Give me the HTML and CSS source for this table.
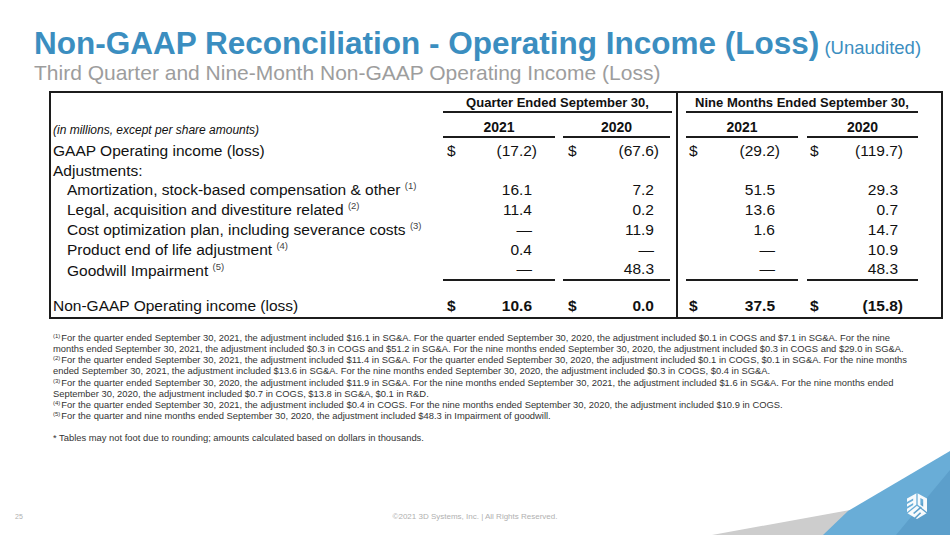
FILE: index.html
```html
<!DOCTYPE html>
<html lang="en">
<head>
<meta charset="utf-8">
<title>Non-GAAP Reconciliation - Operating Income (Loss)</title>
<link rel="stylesheet" href="styles.css">
</head>
<body>
<div class="slide">
  <header class="head">
    <h1 class="title">Non-GAAP Reconciliation - Operating Income (Loss)<span class="unaud"> (Unaudited)</span></h1>
    <h2 class="subtitle">Third Quarter and Nine-Month Non-GAAP Operating Income (Loss)</h2>
  </header>

  <div class="tablewrap">
    <table class="recon">
      <colgroup>
        <col class="w-lab"><col class="w-c1"><col class="w-c2"><col class="w-c3"><col class="w-c4">
      </colgroup>
      <tr class="hdr1">
        <td class="lab"></td>
        <td class="c1 grpcell" colspan="2"><div class="grp">Quarter Ended September 30,</div></td>
        <td class="c3 grpcell3" colspan="2"><div class="grp">Nine Months Ended September 30,</div></td>
      </tr>
      <tr class="hdr2">
        <td class="lab units">(in millions, except per share amounts)</td>
        <td class="c1"><div class="yr">2021</div></td>
        <td class="c2"><div class="yr">2020</div></td>
        <td class="c3"><div class="yr">2021</div></td>
        <td class="c4"><div class="yr">2020</div></td>
      </tr>
      <tr>
        <td class="lab">GAAP Operating income (loss)</td>
        <td class="c1"><div class="v"><span class="d">$</span><span class="n">(17.2<span class="cp">)</span></span></div></td>
        <td class="c2"><div class="v"><span class="d">$</span><span class="n">(67.6<span class="cp">)</span></span></div></td>
        <td class="c3"><div class="v"><span class="d">$</span><span class="n">(29.2<span class="cp">)</span></span></div></td>
        <td class="c4"><div class="v"><span class="d">$</span><span class="n">(119.7<span class="cp">)</span></span></div></td>
      </tr>
      <tr>
        <td class="lab">Adjustments:</td>
        <td class="c1"></td><td class="c2"></td><td class="c3"></td><td class="c4"></td>
      </tr>
      <tr>
        <td class="lab ind">Amortization, stock-based compensation &amp; other <sup class="ref">(1)</sup></td>
        <td class="c1"><div class="v"><span class="d"></span><span class="n">16.1</span></div></td>
        <td class="c2"><div class="v"><span class="d"></span><span class="n">7.2</span></div></td>
        <td class="c3"><div class="v"><span class="d"></span><span class="n">51.5</span></div></td>
        <td class="c4"><div class="v"><span class="d"></span><span class="n">29.3</span></div></td>
      </tr>
      <tr>
        <td class="lab ind">Legal, acquisition and divestiture related <sup class="ref">(2)</sup></td>
        <td class="c1"><div class="v"><span class="d"></span><span class="n">11.4</span></div></td>
        <td class="c2"><div class="v"><span class="d"></span><span class="n">0.2</span></div></td>
        <td class="c3"><div class="v"><span class="d"></span><span class="n">13.6</span></div></td>
        <td class="c4"><div class="v"><span class="d"></span><span class="n">0.7</span></div></td>
      </tr>
      <tr>
        <td class="lab ind">Cost optimization plan, including severance costs <sup class="ref">(3)</sup></td>
        <td class="c1"><div class="v"><span class="d"></span><span class="n">—</span></div></td>
        <td class="c2"><div class="v"><span class="d"></span><span class="n">11.9</span></div></td>
        <td class="c3"><div class="v"><span class="d"></span><span class="n">1.6</span></div></td>
        <td class="c4"><div class="v"><span class="d"></span><span class="n">14.7</span></div></td>
      </tr>
      <tr>
        <td class="lab ind">Product end of life adjustment <sup class="ref">(4)</sup></td>
        <td class="c1"><div class="v"><span class="d"></span><span class="n">0.4</span></div></td>
        <td class="c2"><div class="v"><span class="d"></span><span class="n">—</span></div></td>
        <td class="c3"><div class="v"><span class="d"></span><span class="n">—</span></div></td>
        <td class="c4"><div class="v"><span class="d"></span><span class="n">10.9</span></div></td>
      </tr>
      <tr class="last">
        <td class="lab ind">Goodwill Impairment <sup class="ref">(5)</sup></td>
        <td class="c1"><div class="v"><span class="d"></span><span class="n">—</span></div></td>
        <td class="c2"><div class="v"><span class="d"></span><span class="n">48.3</span></div></td>
        <td class="c3"><div class="v"><span class="d"></span><span class="n">—</span></div></td>
        <td class="c4"><div class="v"><span class="d"></span><span class="n">48.3</span></div></td>
      </tr>
      <tr class="total">
        <td class="lab">Non-GAAP Operating income (loss)</td>
        <td class="c1"><div class="v"><span class="d">$</span><span class="n">10.6</span></div></td>
        <td class="c2"><div class="v"><span class="d">$</span><span class="n">0.0</span></div></td>
        <td class="c3"><div class="v"><span class="d">$</span><span class="n">37.5</span></div></td>
        <td class="c4"><div class="v"><span class="d">$</span><span class="n">(15.8<span class="cp">)</span></span></div></td>
      </tr>
    </table>
  </div>

  <div class="notes">
    <div class="nl"><sup>(1)</sup>For the quarter ended September 30, 2021, the adjustment included $16.1 in SG&amp;A. For the quarter ended September 30, 2020, the adjustment included $0.1 in COGS and $7.1 in SG&amp;A. For the nine</div>
    <div class="nl">months ended September 30, 2021, the adjustment included $0.3 in COGS and $51.2 in SG&amp;A. For the nine months ended September 30, 2020, the adjustment included $0.3 in COGS and $29.0 in SG&amp;A.</div>
    <div class="nl"><sup>(2)</sup>For the quarter ended September 30, 2021, the adjustment included $11.4 in SG&amp;A. For the quarter ended September 30, 2020, the adjustment included $0.1 in COGS, $0.1 in SG&amp;A. For the nine months</div>
    <div class="nl">ended September 30, 2021, the adjustment included $13.6 in SG&amp;A. For the nine months ended September 30, 2020, the adjustment included $0.3 in COGS, $0.4 in SG&amp;A.</div>
    <div class="nl"><sup>(3)</sup>For the quarter ended September 30, 2020, the adjustment included $11.9 in SG&amp;A. For the nine months ended September 30, 2021, the adjustment included $1.6 in SG&amp;A. For the nine months ended</div>
    <div class="nl">September 30, 2020, the adjustment included $0.7 in COGS, $13.8 in SG&amp;A, $0.1 in R&amp;D.</div>
    <div class="nl"><sup>(4)</sup>For the quarter ended September 30, 2021, the adjustment included $0.4 in COGS. For the nine months ended September 30, 2020, the adjustment included $10.9 in COGS.</div>
    <div class="nl"><sup>(5)</sup>For the quarter and nine months ended September 30, 2020, the adjustment included $48.3 in Impairment of goodwill.</div>
    <div class="nl star">* Tables may not foot due to rounding; amounts calculated based on dollars in thousands.</div>
  </div>

  <footer class="foot">
    <span class="pg">25</span>
    <span class="copy">©2021 3D Systems, Inc. | All Rights Reserved.</span>
    <span></span>
  </footer>

  <svg class="corner" width="250" height="105" viewBox="0 0 250 105" aria-hidden="true">
    <defs>
      <mask id="cubecut" maskUnits="userSpaceOnUse" x="0" y="0" width="30" height="30">
        <polygon points="10,0 20,5.5 20,20 10,26 0,20 0,5.5" fill="#fff"/>
        <g fill="#000">
          <polygon points="-1,9.6 6.2,5.6 6.2,7.4 -1,11.6"/>
          <polygon points="-1,14.4 6.2,10 6.2,11.9 -1,16.4"/>
          <polygon points="13.4,4.9 16.2,6.4 16.2,13.8 13.4,11.8"/>
          <polygon points="13.6,13.6 14.8,14.6 7.2,21 6,20"/>
          <polygon points="13,19.2 14.2,20.2 7.8,26.6 6.6,25.6"/>
        </g>
        <g stroke="#000" stroke-width="1.3">
          <line x1="10" y1="12" x2="10" y2="-1"/>
          <line x1="10" y1="12" x2="-1" y2="20.8"/>
          <line x1="10" y1="12" x2="21" y2="20.8"/>
        </g>
      </mask>
    </defs>
    <polygon points="12,105 150,80 170,78 170,105" fill="#cdcdcd"/>
    <polygon points="123,105 148,81 250,21 250,105" fill="#69add7"/>
    <polygon points="196,105 250,40 250,105" fill="#5c9fcb"/>
    <g transform="translate(207,63)">
      <rect x="-2" y="-2" width="26" height="32" fill="#f7fafc" mask="url(#cubecut)"/>
    </g>
  </svg>
</div>
</body>
</html>
```

FILE: styles.css
```css
* { box-sizing: border-box; }
html, body { margin: 0; padding: 0; }
body {
  width: 950px;
  height: 535px;
  overflow: hidden;
  background: #ffffff;
  font-family: "Liberation Sans", Arial, sans-serif;
}
.slide {
  position: relative;
  width: 950px;
  height: 535px;
  display: flex;
  flex-direction: column;
}

/* Header */
.head { padding: 28px 0 0 34px; }
.title {
  margin: 0;
  font-size: 31.5px;
  line-height: 31px;
  font-weight: bold;
  color: #3b8ec0;
  white-space: nowrap;
}
.unaud { font-size: 18.5px; font-weight: normal; }
.subtitle {
  margin: -1px 0 0;
  font-size: 21px;
  line-height: 22px;
  font-weight: normal;
  color: #9d9d9d;
  white-space: nowrap;
}

/* Table */
.tablewrap { margin: 7px 0 0 49px; }
.recon {
  width: 894px;
  table-layout: fixed;
  border: 2px solid #1c1c1c;
  border-spacing: 0;
  color: #111111;
}
.w-lab { width: 388px; }
.w-c1 { width: 120px; }
.w-c2 { width: 117px; }
.w-c3 { width: 126px; }
.w-c4 { width: 139px; }
.recon td {
  padding: 0;
  font-size: 15.5px;
  line-height: 19.7px;
  white-space: nowrap;
  vertical-align: bottom;
}
.recon td.lab { padding-left: 2px; }
.recon td.ind { padding-left: 16px; }
.recon td.c1 { padding: 0 4px; }
.recon td.c2 { padding: 0 6px 0 4px; }
.recon td.c3 { padding: 0 4px 0 8px; border-left: 2px solid #1c1c1c; }
.recon td.c4 { padding: 0 23px 0 5px; }
.recon td.grpcell3 { padding-right: 23px; }

.ref {
  font-size: 9.5px;
  line-height: 0;
  vertical-align: 6px;
  color: #444;
}

.hdr1 td { padding-top: 2px !important; }
.grp {
  font-size: 13px;
  line-height: 16px;
  font-weight: bold;
  text-align: center;
  border-bottom: 2px solid #1c1c1c;
}
.hdr2 td { padding-top: 5px !important; padding-bottom: 3px !important; }
.yr {
  font-size: 14px;
  line-height: 18px;
  font-weight: bold;
  text-align: center;
  border-bottom: 2px solid #1c1c1c;
}
.hdr2 td.units {
  font-size: 12px;
  line-height: 14px;
  font-style: italic;
  padding-bottom: 4px !important;
}

.v { display: flex; justify-content: space-between; }
.c1 .d { padding-left: 4px; }
.c1 .n { padding-right: 23px; }
.c2 .d { padding-left: 5px; }
.c2 .n { padding-right: 16px; }
.c3 .d { padding-left: 3px; }
.c3 .n { padding-right: 23px; }
.c4 .d { padding-left: 3px; }
.c4 .n { padding-right: 20px; }
.cp { margin-right: -5px; }

.last .v { border-bottom: 2px solid #1c1c1c; }
.total td { padding-top: 15px !important; padding-bottom: 1.5px !important; }
.total .v { font-weight: bold; }

/* Footnotes */
.notes {
  margin: 13px 0 0 53px;
  font-size: 9.4px;
  line-height: 11px;
  color: #333333;
  white-space: nowrap;
}
.nl { height: 11.1px; }
.notes sup {
  font-size: 6px;
  line-height: 0;
  vertical-align: 3px;
  margin-right: 1px;
}
.notes .star { margin-top: 11px; }

/* Footer */
.foot {
  margin-top: auto;
  display: grid;
  grid-template-columns: 1fr auto 1fr;
  align-items: center;
  padding-bottom: 12px;
  font-size: 8px;
  line-height: 12px;
  color: #b0b0b0;
}
.pg { padding-left: 15px; font-size: 7px; }

.corner {
  position: absolute;
  right: 0;
  bottom: 0;
  display: block;
}
```
